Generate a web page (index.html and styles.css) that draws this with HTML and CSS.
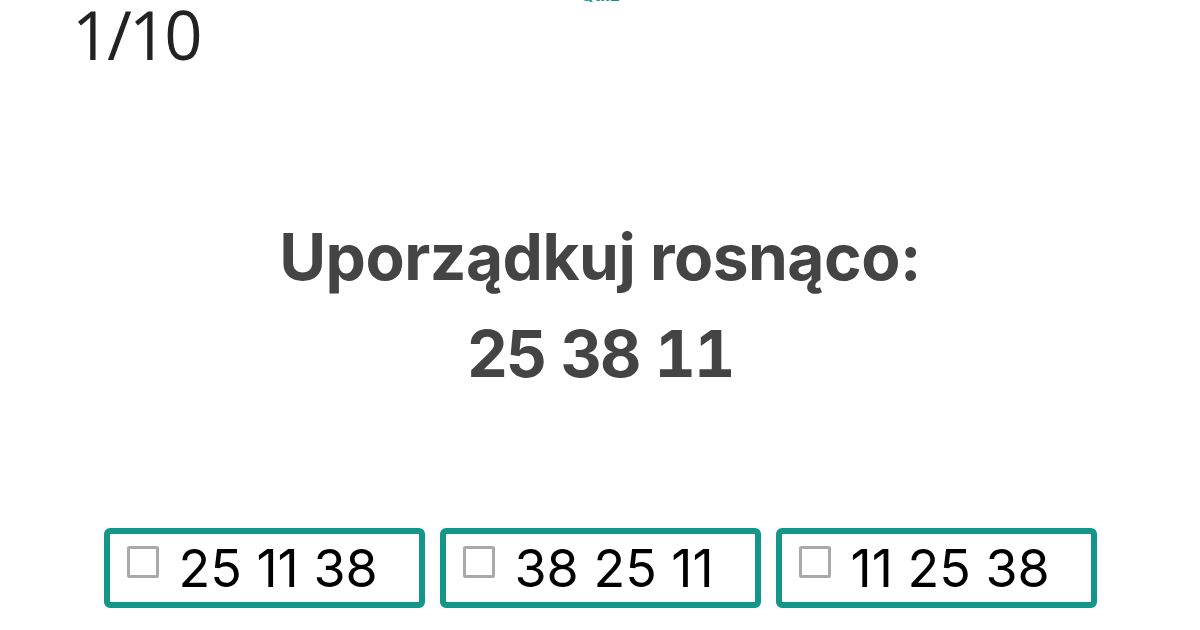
FILE: index.html
```html
<!DOCTYPE html>
<html lang="pl">
<head>
  <meta charset="UTF-8" />
  <title>Quiz</title>
  <link rel="stylesheet" href="styles.css">
</head>
<body>
  <div class="quiz">
    <div class="brand">Quiz</div>

    <div class="counter">1/10</div>

    <section class="question">
      <p>Uporządkuj rosnąco:</p>
      <p class="numbers">25 38 11</p>
    </section>

    <div class="answers">
      <label class="answer">
        <span class="box"></span>
        <span class="value">25 11 38</span>
      </label>
      <label class="answer">
        <span class="box"></span>
        <span class="value">38 25 11</span>
      </label>
      <label class="answer">
        <span class="box"></span>
        <span class="value">11 25 38</span>
      </label>
    </div>
  </div>
</body>
</html>
```

FILE: styles.css
```css
html, body {
  margin: 0;
  padding: 0;
  height: 100%;
  overflow: hidden;
  background: #fff;
  font-family: Inter, 'Noto Sans', sans-serif;
}

.quiz {
  display: flex;
  flex-direction: column;
  height: 100%;
}

/* header title sits mostly above the fold */
.brand {
  margin-top: -20px;
  margin-bottom: -10px;
  height: 30px;
  line-height: 30px;
  text-align: center;
  font-size: 18px;
  font-weight: 700;
  color: #12968a;
}

.counter {
  padding-left: 72px;
  font-family: 'Open Sans', sans-serif;
  font-size: 67px;
  line-height: 68px;
  letter-spacing: -3px;
  color: #222;
}

.question {
  margin-top: 140px;
  text-align: center;
  font-size: 64px;
  font-weight: 700;
  color: #444;
  letter-spacing: -0.5px;
}

.question p {
  margin: 0;
  line-height: 97px;
}

.question .numbers {
  font-variant-numeric: tabular-nums;
  letter-spacing: -2px;
}

.answers {
  display: flex;
  justify-content: center;
  gap: 15px;
  margin-top: 126px;
}

.answer {
  box-sizing: border-box;
  display: flex;
  align-items: center;
  gap: 20px;
  width: 321px;
  height: 80px;
  padding-left: 17px;
  border: 6px solid #12968a;
  border-radius: 6px;
}

.answer .box {
  box-sizing: border-box;
  width: 32px;
  height: 32px;
  margin-top: -12px;
  border: 3px solid #aaa;
  border-radius: 2px;
}

.answer .value {
  font-size: 52px;
  color: #000;
  letter-spacing: 0;
}
```
